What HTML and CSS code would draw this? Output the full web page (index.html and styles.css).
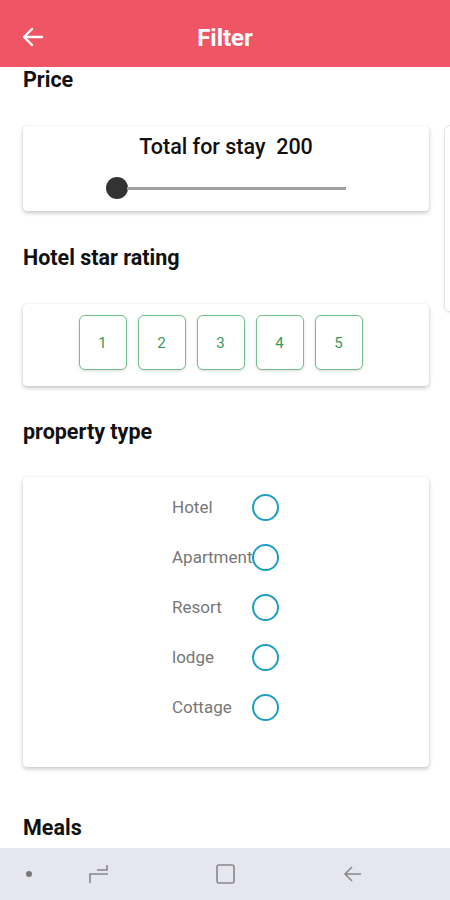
FILE: index.html
```html
<!DOCTYPE html>
<html lang="en">
<head>
    <meta charset="UTF-8">
    <meta name="viewport" content="width=device-width, initial-scale=1.0">
    <title>Filter</title>
    <link rel="stylesheet" href="styles.css">
</head>
<body>
    <div class="screen">
        <header class="topbar">
            <svg class="back" width="22" height="20" viewBox="0 0 22 20">
                <path d="M20 10H3M10 2L2 10l8 8" fill="none" stroke="#fff" stroke-width="2.4" stroke-linecap="round" stroke-linejoin="round"/>
            </svg>
            <h1>Filter</h1>
        </header>

        <div class="content">
            <div class="peek"></div>

            <h2 class="section price-title">Price</h2>
            <div class="card price-card">
                <div class="total">Total for stay&nbsp; 200</div>
                <div class="slider">
                    <span class="thumb"></span>
                    <span class="track"></span>
                </div>
            </div>

            <h2 class="section">Hotel star rating</h2>
            <div class="card stars-card">
                <button class="star">1</button>
                <button class="star">2</button>
                <button class="star">3</button>
                <button class="star">4</button>
                <button class="star">5</button>
            </div>

            <h2 class="section">property type</h2>
            <div class="card type-card">
                <label class="type-row"><span>Hotel</span><span class="radio"></span></label>
                <label class="type-row"><span>Apartment</span><span class="radio"></span></label>
                <label class="type-row"><span>Resort</span><span class="radio"></span></label>
                <label class="type-row"><span>lodge</span><span class="radio"></span></label>
                <label class="type-row"><span>Cottage</span><span class="radio"></span></label>
            </div>

            <h2 class="section meals-title">Meals</h2>
        </div>

        <nav class="navbar">
            <span class="dot"></span>
            <svg class="nav-recent" width="22" height="22" viewBox="0 0 22 22">
                <path d="M9 7h10V2M20 11H2v9" fill="none" stroke="#888" stroke-width="1.6"/>
            </svg>
            <svg class="nav-home" width="22" height="22" viewBox="0 0 22 22">
                <rect x="2" y="2" width="17" height="18" rx="2" fill="none" stroke="#888" stroke-width="1.6"/>
            </svg>
            <svg class="nav-back" width="20" height="20" viewBox="0 0 20 20">
                <path d="M18 10H3M9 3L2 10l7 7" fill="none" stroke="#888" stroke-width="1.5"/>
            </svg>
        </nav>
    </div>
</body>
</html>
```

FILE: styles.css
```css
body {
    margin: 0;
    font-family: Roboto, "Noto Sans", sans-serif;
    background: #fff;
}
.screen {
    width: 450px;
    height: 900px;
    display: flex;
    flex-direction: column;
    overflow: hidden;
}
.topbar {
    height: 67px;
    background-color: #ef5565;
    display: flex;
    align-items: center;
    justify-content: center;
    position: relative;
    flex-shrink: 0;
}
.back {
    position: absolute;
    left: 22px;
    top: 27px;
}
.topbar h1 {
    margin: 9px 0 0;
    color: #fff;
    font-size: 24px;
    font-weight: 700;
}
.content {
    flex: 1;
    padding: 0 21px 0 23px;
    position: relative;
    overflow: hidden;
}
.peek {
    position: absolute;
    left: 444px;
    top: 58px;
    width: 20px;
    height: 185px;
    border: 1px solid #e4e4e4;
    border-radius: 6px;
    box-shadow: 0 1px 3px rgba(0,0,0,0.08);
}
.section {
    margin: 0;
    font-size: 21.5px;
    font-weight: 700;
    color: #111;
    line-height: 24px;
}
.price-title {
    margin-top: 1px;
}
.card {
    background: #fff;
    border-radius: 4px;
    box-shadow: 0 2px 4px rgba(0,0,0,0.22), 0 0 1px rgba(0,0,0,0.15);
}
.price-card {
    height: 85px;
    margin: 34px 0 35px;
    display: flex;
    flex-direction: column;
    align-items: center;
}
.total {
    margin-top: 8px;
    font-size: 21.5px;
    font-weight: 500;
    color: #111;
}
.slider {
    display: flex;
    align-items: center;
    margin-top: 18px;
}
.thumb {
    width: 22px;
    height: 22px;
    border-radius: 50%;
    background: #333;
}
.track {
    width: 219px;
    height: 3px;
    background: #a0a0a0;
    margin-left: -1px;
}
.stars-card {
    height: 82px;
    margin: 34px 0 34px;
    display: flex;
    justify-content: center;
    padding-right: 11px;
    padding-top: 11px;
    box-sizing: border-box;
    gap: 11px;
}
.star {
    width: 48px;
    height: 55px;
    border: 1.5px solid #74bf8e;
    border-radius: 6px;
    background: #fff;
    color: #379a5a;
    font-family: Roboto, sans-serif;
    font-size: 15px;
    box-shadow: 0 1px 3px rgba(0,0,0,0.15);
    padding: 0;
}
.type-card {
    height: 290px;
    margin: 33px 0 49px;
    padding-top: 16px;
    box-sizing: border-box;
    display: flex;
    flex-direction: column;
    gap: 22px;
}
.type-row {
    display: flex;
    align-items: center;
    height: 28px;
    margin-left: 149px;
    font-size: 17px;
    color: #777;
}
.type-row span:first-child {
    width: 80px;
}
.radio {
    width: 27px;
    height: 27px;
    border: 2px solid #1d9ec2;
    border-radius: 50%;
    box-sizing: border-box;
    flex-shrink: 0;
}
.meals-title {
    margin-top: 0;
}
.navbar {
    height: 52px;
    flex-shrink: 0;
    background: #e6e6f0;
    display: flex;
    align-items: center;
}
.navbar .dot {
    width: 6px;
    height: 6px;
    border-radius: 50%;
    background: #777;
    margin-left: 26px;
}
.nav-recent {
    margin-left: 56px;
}
.nav-home {
    margin-left: 105px;
}
.nav-back {
    margin-left: 106px;
}
```
